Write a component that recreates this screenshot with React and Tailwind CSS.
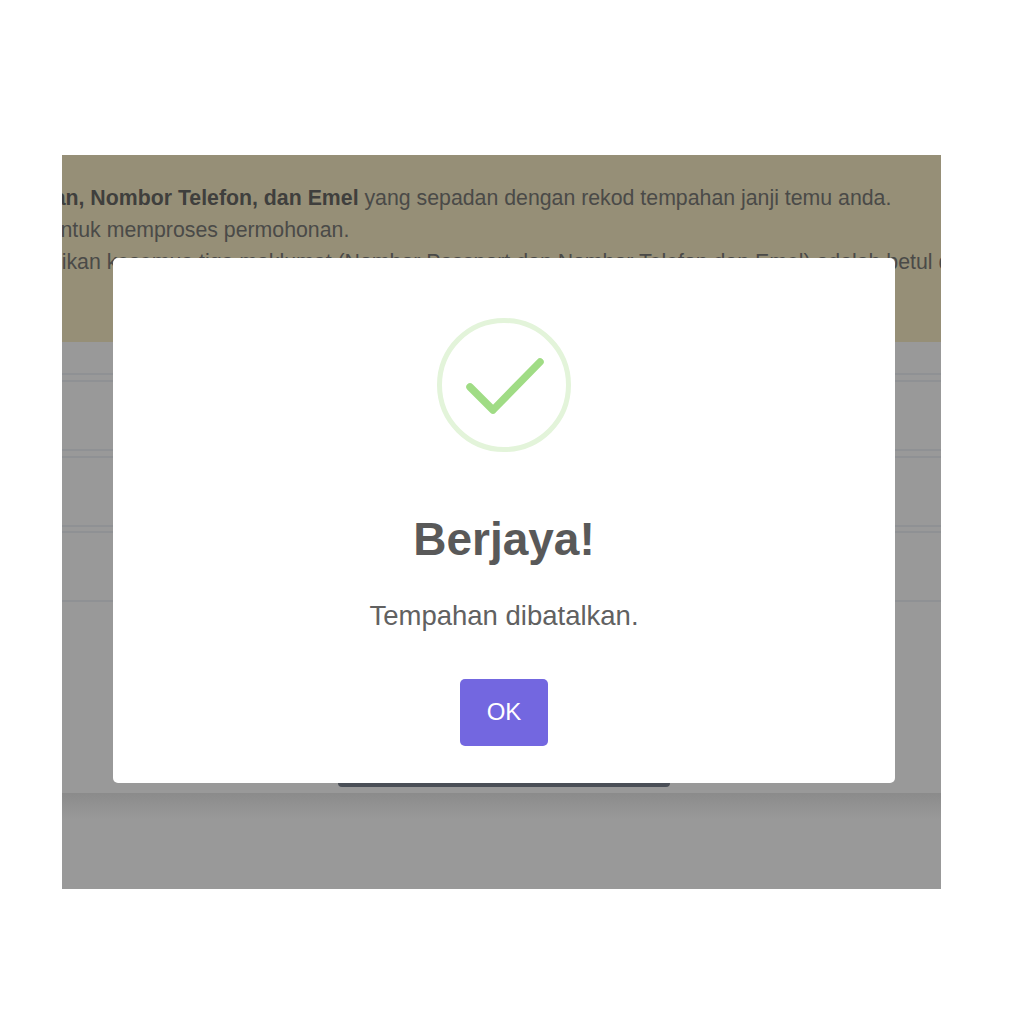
const rowLines = ['top-[218px]', 'top-[225px]', 'top-[294px]', 'top-[301px]', 'top-[370px]', 'top-[376px]', 'top-[445px]']

export default function App() {
  return (
    <div className="min-h-screen bg-white pt-[155px] pl-[62px] font-['Liberation_Sans',Arial,sans-serif]">
      <div className="relative h-[734px] w-[879px] overflow-hidden bg-[#999999]">
        {/* Notice banner */}
        <div className="h-[187px] bg-[#968f77] pt-[27px] text-[21.3px] leading-8 whitespace-nowrap text-[#4a4a48]">
          <p className="ml-[-335px]">
            Sila masukkan <b className="text-[#3f3f3d]">Nombor Pengenalan, Nombor Telefon, dan Emel</b> yang sepadan dengan rekod tempahan janji temu anda.
          </p>
          <p className="ml-[-243px]">Maklumat ini diperlukan untuk memproses permohonan.</p>
          <p className="ml-[-82px]">Sila pastikan kesemua tiga maklumat (Nombor Passport dan Nombor Telefon dan Emel) adalah betul dan</p>
        </div>

        {/* Form rows behind the overlay */}
        {rowLines.map((pos) => (
          <div key={pos} className={`absolute inset-x-0 h-[2px] bg-[#8f9194] ${pos}`}></div>
        ))}
        <div className="absolute left-[276px] top-[620px] h-[12px] w-[332px] rounded-b bg-[#4a4f57]"></div>
        <div className="absolute inset-x-0 top-[638px] h-[26px] bg-gradient-to-b from-[#8b8b8b] to-[#999999]"></div>

        {/* Success modal */}
        <div className="absolute left-[51px] top-[103px] flex h-[525px] w-[782px] flex-col items-center rounded-[5px] bg-white">
          <div className="mt-[60px] h-[134px] w-[134px] rounded-full border-[5px] border-[#e3f4da]">
            <svg width="124" height="124" viewBox="0 0 124 124" fill="none">
              <path d="M28 64 L51 87 L98 39" stroke="#a0dc85" strokeWidth="7.5" strokeLinecap="round" strokeLinejoin="round" />
            </svg>
          </div>
          <h2 className="mt-[61px] text-[46px] leading-[52px] font-bold text-[#595959]">Berjaya!</h2>
          <p className="mt-[35px] text-[27.5px] leading-[32px] text-[#616161]">Tempahan dibatalkan.</p>
          <button className="mt-[47px] h-[67px] w-[88px] rounded-[5px] bg-[#7367e0] pb-[2px] text-[24px] text-white">OK</button>
        </div>
      </div>
    </div>
  )
}
